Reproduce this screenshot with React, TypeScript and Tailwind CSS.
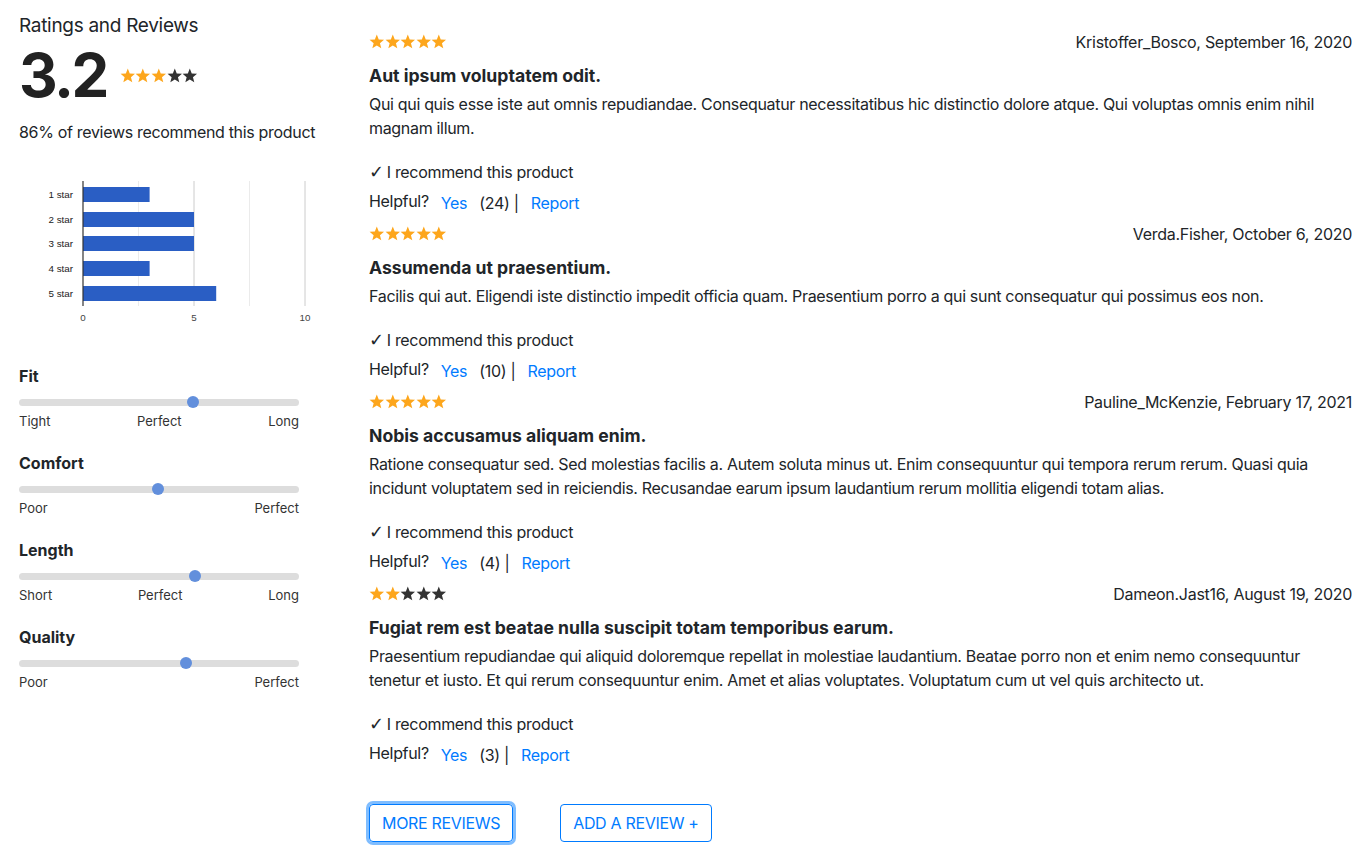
import React from "react";

const FONT = "font-['Inter','Noto_Sans',sans-serif]";

type Review = {
  rating: number;
  user: string;
  date: string;
  title: string;
  body: string;
  helpful: number;
};

const reviews: Review[] = [
  {
    rating: 5,
    user: "Kristoffer_Bosco",
    date: "September 16, 2020",
    title: "Aut ipsum voluptatem odit.",
    body: "Qui qui quis esse iste aut omnis repudiandae. Consequatur necessitatibus hic distinctio dolore atque. Qui voluptas omnis enim nihil magnam illum.",
    helpful: 24,
  },
  {
    rating: 5,
    user: "Verda.Fisher",
    date: "October 6, 2020",
    title: "Assumenda ut praesentium.",
    body: "Facilis qui aut. Eligendi iste distinctio impedit officia quam. Praesentium porro a qui sunt consequatur qui possimus eos non.",
    helpful: 10,
  },
  {
    rating: 5,
    user: "Pauline_McKenzie",
    date: "February 17, 2021",
    title: "Nobis accusamus aliquam enim.",
    body: "Ratione consequatur sed. Sed molestias facilis a. Autem soluta minus ut. Enim consequuntur qui tempora rerum rerum. Quasi quia incidunt voluptatem sed in reiciendis. Recusandae earum ipsum laudantium rerum mollitia eligendi totam alias.",
    helpful: 4,
  },
  {
    rating: 2,
    user: "Dameon.Jast16",
    date: "August 19, 2020",
    title: "Fugiat rem est beatae nulla suscipit totam temporibus earum.",
    body: "Praesentium repudiandae qui aliquid doloremque repellat in molestiae laudantium. Beatae porro non et enim nemo consequuntur tenetur et iusto. Et qui rerum consequuntur enim. Amet et alias voluptates. Voluptatum cum ut vel quis architecto ut.",
    helpful: 3,
  },
];

const characteristics = [
  { name: "Fit", pos: 62, labels: ["Tight", "Perfect", "Long"] },
  { name: "Comfort", pos: 49.8, labels: ["Poor", "Perfect"] },
  { name: "Length", pos: 62.9, labels: ["Short", "Perfect", "Long"] },
  { name: "Quality", pos: 59.6, labels: ["Poor", "Perfect"] },
];

const breakdown = [3, 5, 5, 3, 6];

function Stars({ value }: { value: number }) {
  return (
    <div className="flex items-center">
      {[1, 2, 3, 4, 5].map((i) => (
        <svg key={i} viewBox="1 1 22 22" className="w-[15.6px] h-[15.6px]">
          <path
            d="M12 1.8l2.75 6.9 7.45.45-5.75 4.75 1.85 7.25L12 17.1l-6.3 4.05 1.85-7.25L1.8 9.15l7.45-.45z"
            fill={i <= value ? "#fda61c" : "#333333"}
          />
        </svg>
      ))}
    </div>
  );
}

function Chart() {
  const x0 = 64;
  const unit = 22.2;
  const tops = [12, 37, 61, 86, 111];
  return (
    <svg width="300" height="155" className="block tracking-normal">
      <line x1={x0 + 2.5 * unit} y1="6" x2={x0 + 2.5 * unit} y2="131" stroke="#ebebeb" />
      <line x1={x0 + 7.5 * unit} y1="6" x2={x0 + 7.5 * unit} y2="131" stroke="#ebebeb" />
      <line x1={x0 + 5 * unit} y1="6" x2={x0 + 5 * unit} y2="131" stroke="#cccccc" />
      <line x1={x0 + 10 * unit} y1="6" x2={x0 + 10 * unit} y2="131" stroke="#cccccc" />
      {breakdown.map((v, i) => (
        <g key={i}>
          <rect x={x0} y={tops[i]} width={v * unit} height="15" fill="#2a5ec4" />
          <text
            x="54"
            y={tops[i] + 11}
            textAnchor="end"
            fontSize="9.8"
            fill="#222"
            fontFamily="Liberation Sans, Arial, sans-serif"
          >
            {i + 1} star
          </text>
        </g>
      ))}
      <line x1={x0} y1="6" x2={x0} y2="131" stroke="#333" strokeWidth="1.2" />
      {[0, 5, 10].map((t) => (
        <text
          key={t}
          x={x0 + t * unit}
          y="146"
          textAnchor="middle"
          fontSize="9.8"
          fill="#444"
          fontFamily="Liberation Sans, Arial, sans-serif"
        >
          {t}
        </text>
      ))}
    </svg>
  );
}

function Characteristic({ c }: { c: (typeof characteristics)[number] }) {
  return (
    <div className="mb-[22px]">
      <div className="text-[16px] leading-[24px] font-bold">{c.name}</div>
      <div className="relative mt-[8px] h-[12px] w-[280px]">
        <div className="absolute left-0 right-0 top-[3px] h-[6.5px] rounded-full bg-[#dddddd]" />
        <div
          className="absolute top-0 h-[12px] w-[12px] -ml-[6px] rounded-full bg-[#628fdc]"
          style={{ left: `${c.pos}%` }}
        />
      </div>
      <div className="mt-[5px] flex w-[280px] justify-between text-[13px] leading-[16px] text-[#333]">
        {c.labels.map((l) => (
          <span key={l}>{l}</span>
        ))}
      </div>
    </div>
  );
}

function ReviewItem({ r }: { r: Review }) {
  return (
    <div>
      <div className="flex h-[24px] items-center justify-between">
        <Stars value={r.rating} />
        <span className="tracking-[-0.28px]">
          {r.user}, {r.date}
        </span>
      </div>
      <div className="mt-[10px] text-[17.6px] leading-[24px] font-bold">{r.title}</div>
      <p className="mt-[4px] leading-[24px] tracking-[-0.32px]">{r.body}</p>
      <div className="mt-[20px] flex h-[24px] items-center tracking-[-0.32px]">
        <span className="mr-[3px] font-['DejaVu_Sans',sans-serif] text-[18px] leading-none">✓</span>
        <span>I recommend this product</span>
      </div>
      <div className="flex h-[38px] items-center tracking-[-0.32px]">
        <span className="mb-[4px]">Helpful?</span>
        <button className="px-[12px] text-[#007bff]">Yes</button>
        <span>({r.helpful}) |</span>
        <button className="px-[12px] text-[#007bff]">Report</button>
      </div>
    </div>
  );
}

export default function App() {
  return (
    <div className={`${FONT} flex min-h-screen bg-white text-[16px] leading-[24px] text-[#212529]`}>
      <aside className="w-[369px] shrink-0 pl-[19px] pt-[14px]">
        <h2 className="text-[19px] leading-[24px] tracking-[-0.3px]">Ratings and Reviews</h2>
        <div className="mt-[7px] flex items-center">
          <span className="text-[60px] leading-[60px] font-bold tracking-[-2.5px] text-[#222]">3.2</span>
          <div className="ml-[13px] mt-[2px]">
            <Stars value={3} />
          </div>
        </div>
        <p className="mt-[15px] tracking-[-0.32px]">86% of reviews recommend this product</p>
        <div className="mt-[31px]">
          <Chart />
        </div>
        <div className="mt-[34px]">
          {characteristics.map((c) => (
            <Characteristic key={c.name} c={c} />
          ))}
        </div>
      </aside>
      <main className="flex-1 pr-[20px] pt-[30px]">
        {reviews.map((r) => (
          <ReviewItem key={r.user} r={r} />
        ))}
        <div className="mt-[30px] flex gap-[47px] tracking-[-0.32px]">
          <button className="h-[38px] rounded-[4px] border border-[#007bff] px-[12px] text-[#007bff] shadow-[0_0_0_3px_rgba(0,123,255,0.5)]">
            MORE REVIEWS
          </button>
          <button className="h-[38px] rounded-[4px] border border-[#007bff] px-[12px] text-[#007bff]">
            ADD A REVIEW +
          </button>
        </div>
      </main>
    </div>
  );
}
